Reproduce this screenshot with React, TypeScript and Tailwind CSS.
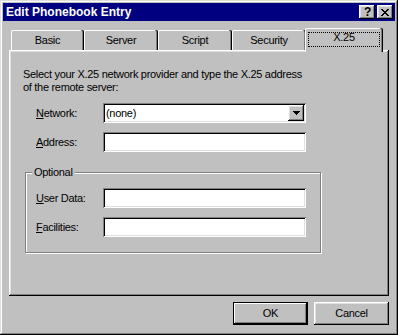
import React from 'react';

const raised =
  'shadow-[inset_-1px_-1px_0_#000,inset_1px_1px_0_#fff,inset_-2px_-2px_0_#808080,inset_2px_2px_0_#dfdfdf]';
const sunken =
  'shadow-[inset_1px_1px_0_#808080,inset_-1px_-1px_0_#fff,inset_2px_2px_0_#000,inset_-2px_-2px_0_#dfdfdf]';

const CloseGlyph: React.FC = () => (
  <svg width="8" height="7" viewBox="0 0 8 7" shapeRendering="crispEdges">
    <path
      d="M0 0h2v1H0zM6 0h2v1H6zM1 1h2v1H1zM5 1h2v1H5zM2 2h4v1H2zM3 3h2v1H3zM2 4h4v1H2zM1 5h2v1H1zM5 5h2v1H5zM0 6h2v1H0zM6 6h2v1H6z"
      fill="#000"
    />
  </svg>
);

const ArrowGlyph: React.FC = () => (
  <svg width="7" height="4" viewBox="0 0 7 4" shapeRendering="crispEdges">
    <path d="M0 0h7v1H0zM1 1h5v1H1zM2 2h3v1H2zM3 3h1v1H3z" fill="#000" />
  </svg>
);

interface FieldRowProps {
  label: React.ReactNode;
  children?: React.ReactNode;
}

const FieldRow: React.FC<FieldRowProps> = ({ label, children }) => (
  <div className="flex items-center">
    <span className="w-[67px] leading-[13px]">{label}</span>
    {children ?? <div className={`w-[203px] h-[20px] bg-white ${sunken}`} />}
  </div>
);

const tabs = [
  { name: 'Basic', w: 'w-[73px]' },
  { name: 'Server', w: 'w-[74px]' },
  { name: 'Script', w: 'w-[74px]' },
  { name: 'Security', w: 'w-[74px]' },
];

const tabShadow =
  'shadow-[inset_-1px_0_0_#000,inset_-2px_0_0_#808080,inset_1px_0_0_#fff,inset_0_1px_0_#fff]';

export default function App() {
  return (
    <div
      className={`w-[398px] h-[335px] bg-[#c0c0c0] p-[3px] flex flex-col text-[11px] tracking-[-0.3px] text-black font-['Liberation_Sans',Arial,sans-serif] shadow-[inset_-1px_-1px_0_#000,inset_1px_1px_0_#dfdfdf,inset_-2px_-2px_0_#808080,inset_2px_2px_0_#fff]`}
    >
      {/* title bar */}
      <div className="h-[18px] bg-[#000080] flex items-center pl-[3px] pr-[2px]">
        <span className="flex-1 text-white font-bold text-[12px] leading-[14px] tracking-normal">
          Edit Phonebook Entry
        </span>
        <div className="flex gap-[2px]">
          <div className={`w-[16px] h-[14px] bg-[#c0c0c0] flex items-center justify-center ${raised}`}>
            <span className="font-bold text-[12px] leading-[12px] pl-[1px]">?</span>
          </div>
          <div className={`w-[16px] h-[14px] bg-[#c0c0c0] flex items-center justify-center ${raised}`}>
            <CloseGlyph />
          </div>
        </div>
      </div>

      <div className="flex flex-col px-[6px]">
        {/* tabs */}
        <div className="mt-[7px] h-[22px] flex items-end pl-[2px] relative z-10">
          {tabs.map((t) => (
            <div
              key={t.name}
              className={`${t.w} h-[20px] flex items-center justify-center rounded-t-[2px] leading-[13px] ${tabShadow}`}
            >
              {t.name}
            </div>
          ))}
          <div
            className={`w-[78px] h-[24px] -mb-[2px] -ml-[1px] bg-[#c0c0c0] rounded-t-[2px] pt-[4px] px-[3px] ${tabShadow}`}
          >
            <div className="h-[15px] border border-dotted border-black text-center leading-[9px]">X.25</div>
          </div>
        </div>

        {/* tab page */}
        <div className="w-[380px] h-[246px] pt-[18px] pl-[14px] flex flex-col shadow-[inset_-1px_-1px_0_#000,inset_1px_1px_0_#fff,inset_-2px_-2px_0_#808080,inset_2px_2px_0_#dfdfdf]">
          <p className="leading-[13px] whitespace-nowrap">
            Select your X.25 network provider and type the X.25 address
            <br />
            of the remote server:
          </p>

          <div className="ml-[13px] mt-[9px] flex flex-col gap-[9px]">
            <FieldRow
              label={
                <>
                  <span className="underline">N</span>etwork:
                </>
              }
            >
              <div className={`w-[203px] h-[20px] bg-white flex items-center justify-between p-[2px] ${sunken}`}>
                <span className="pl-[1px] leading-[13px]">(none)</span>
                <div className={`w-[16px] h-[16px] bg-[#c0c0c0] flex items-center justify-center ${raised}`}>
                  <ArrowGlyph />
                </div>
              </div>
            </FieldRow>
            <FieldRow
              label={
                <>
                  <span className="underline">A</span>ddress:
                </>
              }
            />
          </div>

          <fieldset className="ml-[2px] mt-[14px] w-[296px] border border-[#808080] p-0 m-0 shadow-[inset_1px_1px_0_#fff,1px_1px_0_#fff]">
            <legend className="ml-[6px] px-[2px] leading-[13px] bg-[#c0c0c0]">Optional</legend>
            <div className="pl-[10px] pt-[9px] pb-[15px] flex flex-col gap-[9px]">
              <FieldRow
                label={
                  <>
                    <span className="underline">U</span>ser Data:
                  </>
                }
              />
              <FieldRow
                label={
                  <>
                    <span className="underline">F</span>acilities:
                  </>
                }
              />
            </div>
          </fieldset>
        </div>

        {/* buttons */}
        <div className="mt-[6px] flex justify-end gap-[6px] w-[380px]">
          <button className="w-[75px] h-[23px] bg-[#c0c0c0] leading-[13px] shadow-[inset_0_0_0_1px_#000,inset_-2px_-2px_0_#000,inset_2px_2px_0_#fff,inset_-3px_-3px_0_#808080]">
            OK
          </button>
          <button className={`w-[75px] h-[23px] bg-[#c0c0c0] leading-[13px] ${raised}`}>Cancel</button>
        </div>
      </div>
    </div>
  );
}
